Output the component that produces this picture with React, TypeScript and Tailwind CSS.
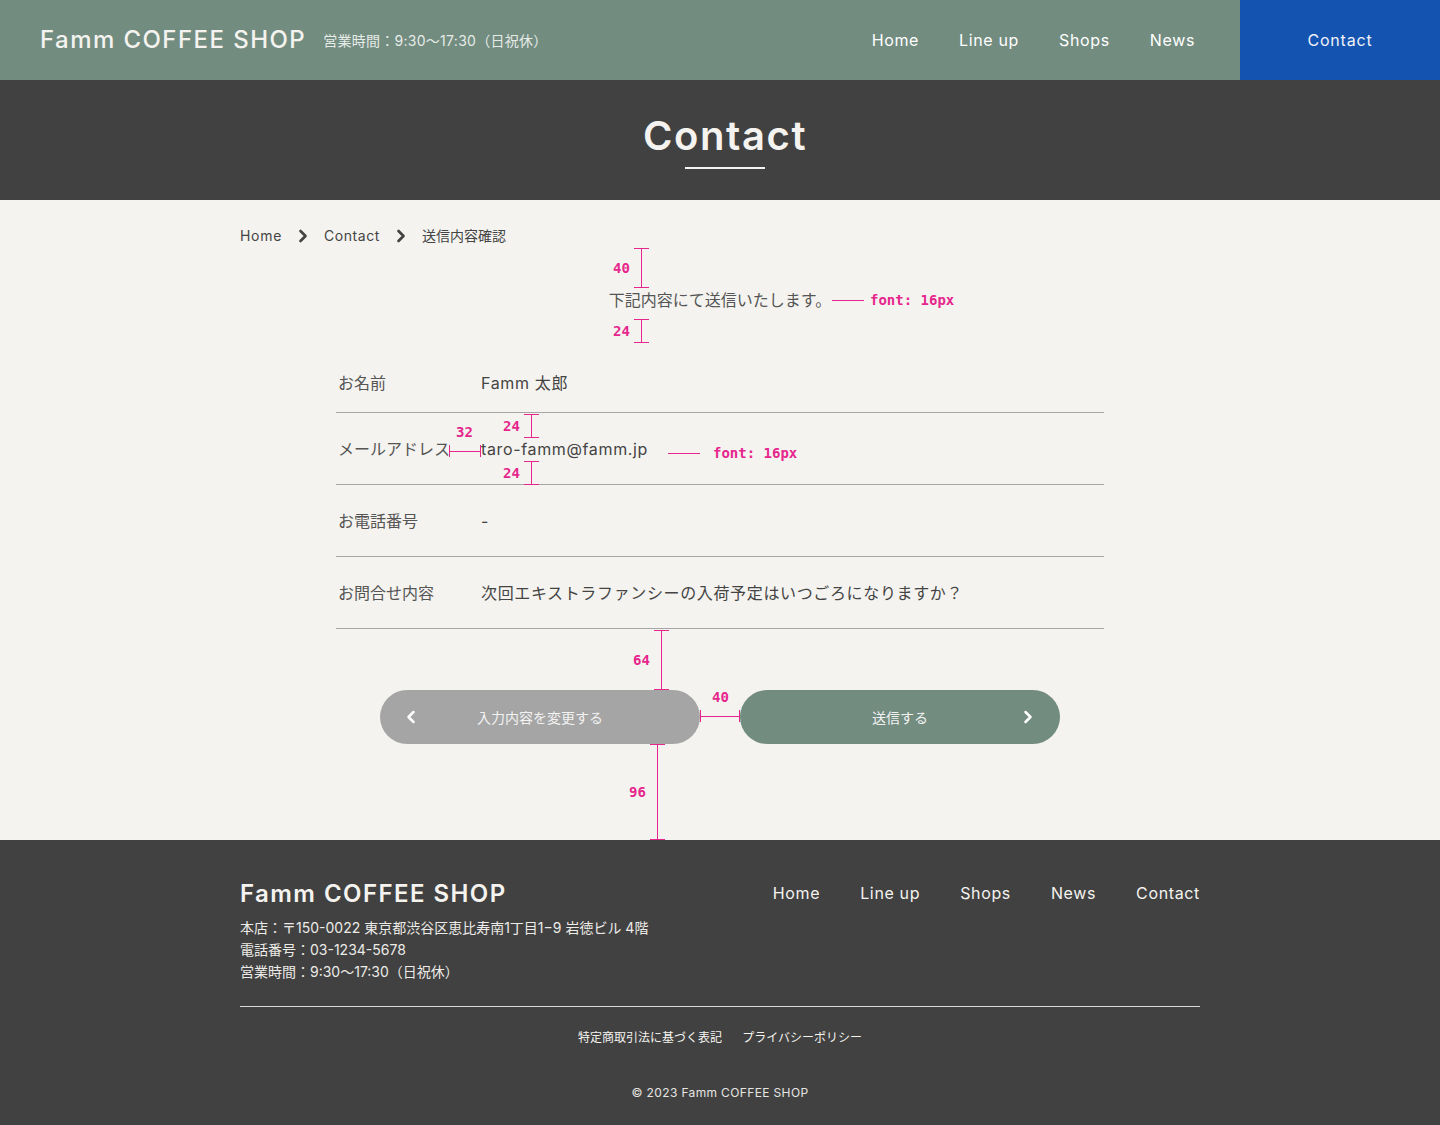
import React from 'react';
import { ChevronLeft, ChevronRight } from 'lucide-react';

const navItems = ['Home', 'Line up', 'Shops', 'News'];

const rows = [
  { label: 'お名前', value: 'Famm 太郎' },
  { label: 'メールアドレス', value: 'taro-famm@famm.jp' },
  { label: 'お電話番号', value: '-' },
  { label: 'お問合せ内容', value: '次回エキストラファンシーの入荷予定はいつごろになりますか？' },
];

export default function App() {
  return (
    <div className="min-h-screen bg-[#f4f3ef] font-['Inter','Noto_Sans_CJK_JP',sans-serif] text-[#444]">
      {/* Header */}
      <header className="flex h-20 items-center bg-[#728c80]">
        <div className="flex items-center gap-[17px] pl-10">
          <span className="text-[24px] font-medium tracking-[0.06em] text-[#f4f3ef]">Famm COFFEE SHOP</span>
          <span className="text-[14px] tracking-[0.02em] text-[#e6ebe7]">営業時間：9:30〜17:30（日祝休）</span>
        </div>
        <nav className="ml-auto flex gap-10 pr-[45px] text-[16px] tracking-[0.04em] text-white">
          {navItems.map((n) => (
            <a key={n} href="#">{n}</a>
          ))}
        </nav>
        <a href="#" className="flex h-full w-[200px] items-center justify-center bg-[#1553b0] text-[16px] tracking-[0.05em] text-[#eef2f8]">
          Contact
        </a>
      </header>

      {/* Page title */}
      <section className="flex h-[120px] flex-col items-center bg-[#414141] pl-[10px] pt-[32px]">
        <h1 className="text-[40px] font-semibold leading-[48px] tracking-[0.04em] text-[#f4f3ef]">Contact</h1>
        <div className="mt-[7px] h-[2px] w-20 bg-[#f4f3ef]" />
      </section>

      {/* Main */}
      <main className="relative pb-24">
        <div className="mx-auto flex w-[960px] items-center gap-[11px] pt-[26px] text-[14px] leading-5 text-[#444]">
          <span className="tracking-[0.05em]">Home</span>
          <ChevronRight size={20} strokeWidth={3.2} className="text-[#444]" />
          <span className="tracking-[0.04em]">Contact</span>
          <ChevronRight size={20} strokeWidth={3.2} className="text-[#444]" />
          <span>送信内容確認</span>
        </div>

        <p className="mt-[42px] text-center text-[16px] leading-6 text-[#555]">下記内容にて送信いたします。</p>

        <div className="mx-auto mt-[35px] w-[768px]">
          {rows.map((r, i) => (
            <div
              key={r.label}
              className={
                i === 0
                  ? 'flex h-[66px] items-start border-b border-[#a6a6a6] pt-6 leading-6'
                  : 'flex h-[72px] items-center border-b border-[#a6a6a6] leading-6'
              }
            >
              <div className="w-[113px] shrink-0 whitespace-nowrap pl-[2px] text-[16px] text-[#555]">{r.label}</div>
              <div className="ml-8 text-[16px] tracking-[0.04em] text-[#444]">{r.value}</div>
            </div>
          ))}
        </div>

        <div className="mt-[61px] flex justify-center gap-10">
          <button className="relative flex h-[54px] w-[320px] items-center justify-center rounded-full bg-[#a5a5a5] text-[14px] text-[#f2f2f2]">
            <ChevronLeft size={20} strokeWidth={3} className="absolute left-[21px] text-white" />
            入力内容を変更する
          </button>
          <button className="relative flex h-[54px] w-[320px] items-center justify-center rounded-full bg-[#728c80] text-[14px] text-[#f2f2f2]">
            送信する
            <ChevronRight size={20} strokeWidth={3} className="absolute right-[22px] text-white" />
          </button>
        </div>

        {/* Spec annotations */}
        <div className="pointer-events-none font-['DejaVu_Sans_Mono',monospace] text-[14px] font-bold text-[#e6268c]">
          {/* 40 above intro */}
          <div className="absolute left-[634px] top-[48px] flex h-[40px] w-[15px] justify-center border-y border-[#e6268c]">
            <div className="h-full w-px bg-[#e6268c]" />
          </div>
          <span className="absolute left-[613px] top-[58px] leading-5">40</span>

          {/* font 16 for intro */}
          <div className="absolute left-[832px] top-[100px] h-px w-[32px] bg-[#e6268c]" />
          <span className="absolute left-[870px] top-[90px] leading-5">font: 16px</span>

          {/* 24 below intro */}
          <div className="absolute left-[634px] top-[119px] flex h-[24px] w-[15px] justify-center border-y border-[#e6268c]">
            <div className="h-full w-px bg-[#e6268c]" />
          </div>
          <span className="absolute left-[613px] top-[121px] leading-5">24</span>

          {/* 24 above email */}
          <div className="absolute left-[524px] top-[214px] flex h-[24px] w-[15px] justify-center border-y border-[#e6268c]">
            <div className="h-full w-px bg-[#e6268c]" />
          </div>
          <span className="absolute left-[503px] top-[216px] leading-5">24</span>

          {/* 24 below email */}
          <div className="absolute left-[524px] top-[261px] flex h-[24px] w-[15px] justify-center border-y border-[#e6268c]">
            <div className="h-full w-px bg-[#e6268c]" />
          </div>
          <span className="absolute left-[503px] top-[263px] leading-5">24</span>

          {/* 32 gap */}
          <div className="absolute left-[449px] top-[245px] flex h-[12px] w-[32px] items-center border-x border-[#e6268c]">
            <div className="h-px w-full bg-[#e6268c]" />
          </div>
          <span className="absolute left-[456px] top-[222px] leading-5">32</span>

          {/* font 16 for value */}
          <div className="absolute left-[668px] top-[253px] h-px w-[32px] bg-[#e6268c]" />
          <span className="absolute left-[713px] top-[243px] leading-5">font: 16px</span>

          {/* 64 */}
          <div className="absolute left-[654px] top-[430px] flex h-[60px] w-[15px] justify-center border-y border-[#e6268c]">
            <div className="h-full w-px bg-[#e6268c]" />
          </div>
          <span className="absolute left-[633px] top-[450px] leading-5">64</span>

          {/* 40 between buttons */}
          <div className="absolute left-[700px] top-[510px] flex h-[12px] w-[40px] items-center border-x border-[#e6268c]">
            <div className="h-px w-full bg-[#e6268c]" />
          </div>
          <span className="absolute left-[712px] top-[487px] leading-5">40</span>

          {/* 96 */}
          <div className="absolute left-[650px] top-[544px] flex h-[96px] w-[15px] justify-center border-y border-[#e6268c]">
            <div className="h-full w-px bg-[#e6268c]" />
          </div>
          <span className="absolute left-[629px] top-[582px] leading-5">96</span>
        </div>
      </main>

      {/* Footer */}
      <footer className="bg-[#414141] pb-[23px] pt-[38px] text-[#f4f3ef]">
        <div className="mx-auto w-[960px]">
          <div className="flex items-start justify-between">
            <div>
              <div className="text-[24px] font-semibold leading-8 tracking-[0.06em]">Famm COFFEE SHOP</div>
              <div className="mt-[7px] text-[14px] leading-[22px] text-[#ecebe7]">
                <p>本店：〒150-0022 東京都渋谷区恵比寿南1丁目1−9 岩徳ビル 4階</p>
                <p>電話番号：03-1234-5678</p>
                <p>営業時間：9:30〜17:30（日祝休）</p>
              </div>
            </div>
            <nav className="flex gap-10 pt-[3px] text-[16px] leading-6 tracking-[0.04em]">
              {[...navItems, 'Contact'].map((n) => (
                <a key={n} href="#">{n}</a>
              ))}
            </nav>
          </div>
          <div className="mt-[23px] h-px bg-[#d9d9d9]" />
          <div className="mt-[22px] flex justify-center gap-5 text-[12px] leading-[18px]">
            <a href="#">特定商取引法に基づく表記</a>
            <a href="#">プライバシーポリシー</a>
          </div>
          <p className="mt-[37px] text-center text-[12px] leading-[18px] tracking-[0.03em] text-[#e6e5e1]">© 2023 Famm COFFEE SHOP</p>
        </div>
      </footer>
    </div>
  );
}
